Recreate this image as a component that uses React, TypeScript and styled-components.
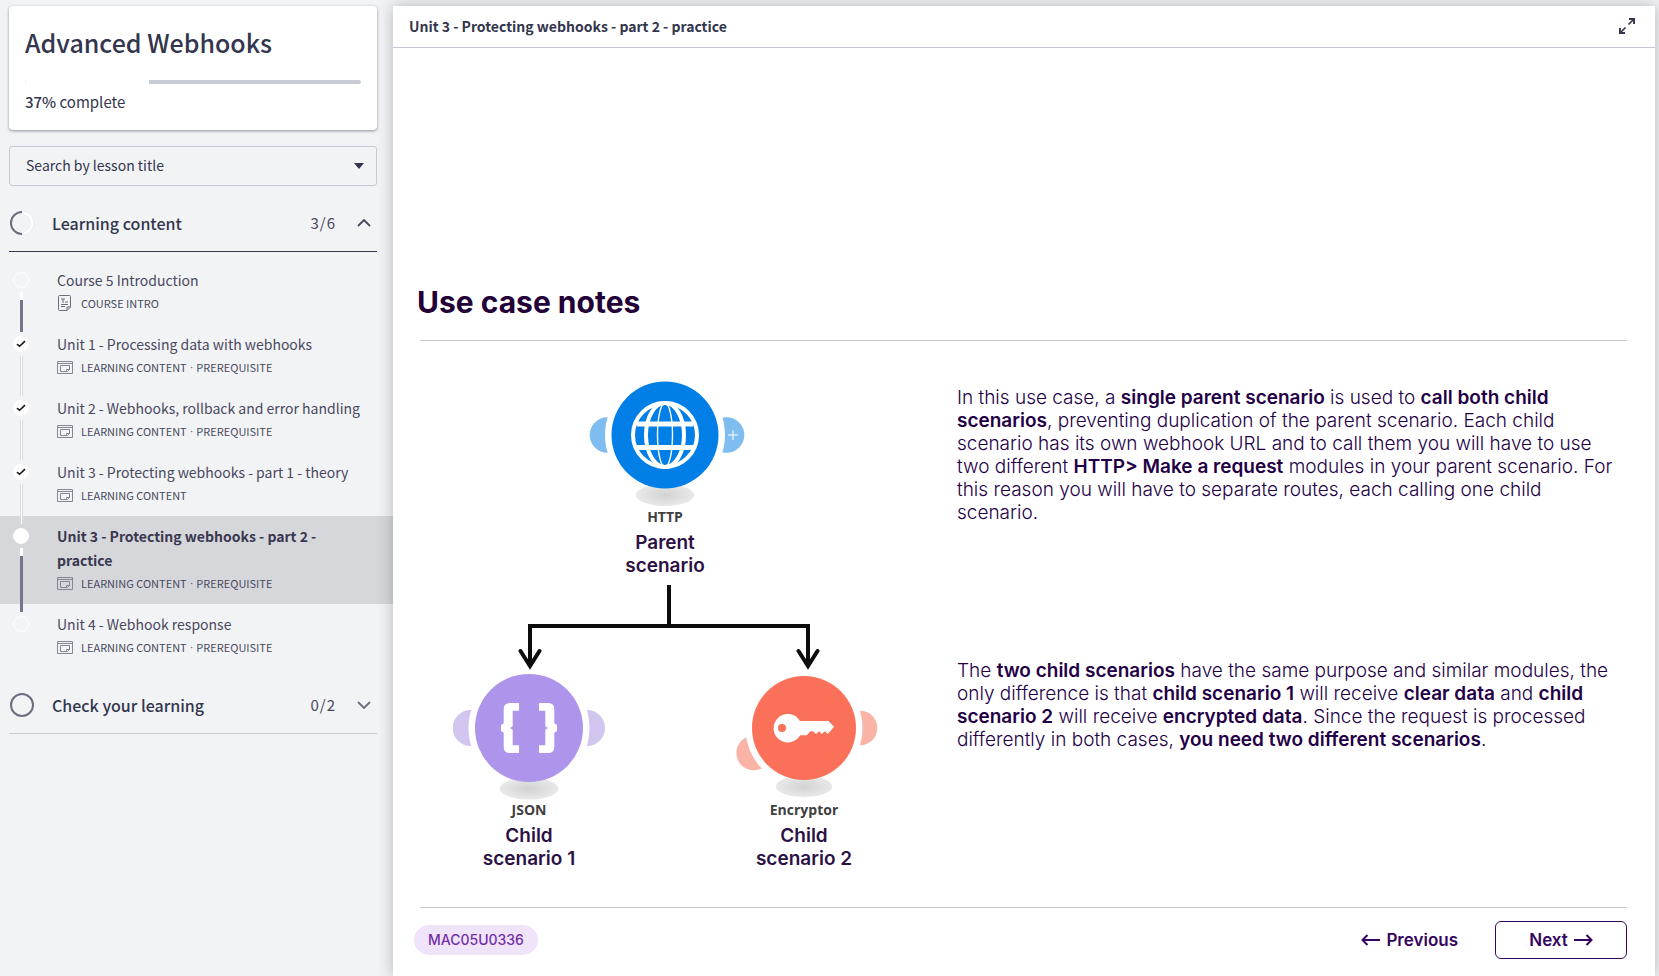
import React from "react";
import styled, { createGlobalStyle, css } from "styled-components";

const UI_FONT = '"Noto Sans CJK SC", "Noto Sans", sans-serif';
const SLIDE_FONT = 'Inter, "Liberation Sans", sans-serif';

const INK = "#33364d";
const INK_SOFT = "#4a4960";
const GREY = "#6d6d82";
const PURPLE = "#230046";

const GlobalStyle = createGlobalStyle`
  *, *::before, *::after { box-sizing: border-box; }
  body { margin: 0; background: #f1f3f5; color: ${INK}; font-family: ${UI_FONT}; }
  h1, h2, p, ol { margin: 0; padding: 0; }
  button, select { font: inherit; color: inherit; }
`;

const Page = styled.div`
  display: flex;
  min-height: 100vh;
`;

/* ---------- sidebar ---------- */

const Sidebar = styled.aside`
  flex: none;
  width: 393px;
  padding-top: 6px;
`;

const ProgressCard = styled.section`
  height: 124px;
  margin: 0 16px 16px 9px;
  padding: 16px 16px 0;
  background: #fff;
  border-radius: 4px;
  box-shadow: 0 1px 3px rgba(40, 44, 60, 0.5);
`;

const CourseTitle = styled.h1`
  font-size: 25px;
  line-height: 40px;
  font-weight: 500;
`;

const ProgressTrack = styled.div`
  height: 4px;
  margin-top: 18px;
  border-radius: 2px;
  background: #c8cad6;
  overflow: hidden;
`;

const ProgressFill = styled.div`
  height: 100%;
  background: #fff;
`;

const ProgressText = styled.p`
  margin-top: 6px;
  font-size: 15px;
  line-height: 24px;

  strong { font-weight: 500; }
`;

const SearchBox = styled.label`
  display: flex;
  align-items: center;
  height: 40px;
  margin: 0 16px 9px 9px;
  padding-right: 12px;
  border: 1px solid #c6c8d6;
  border-radius: 3px;
`;

const SearchSelect = styled.select`
  flex: 1;
  height: 38px;
  padding: 0 0 2px 16px;
  border: 0;
  background: transparent;
  appearance: none;
  font-size: 14px;
`;

const SectionHeader = styled.button<{ $open?: boolean }>`
  display: flex;
  align-items: center;
  width: 368px;
  height: 57px;
  margin-left: 9px;
  padding: 0 6px 0 1px;
  border: 0;
  border-bottom: 1px solid ${(p) => (p.$open ? INK : "#c9cad2")};
  background: transparent;
  text-align: left;
`;

const SectionTitle = styled.span`
  flex: 1;
  margin-left: 18px;
  font-size: 16px;
  font-weight: 500;
  line-height: 24px;
`;

const SectionCount = styled.span`
  margin-right: 21px;
  font-size: 15px;
  line-height: 24px;
  letter-spacing: 1px;
  color: ${INK_SOFT};
`;

const LessonList = styled.ol`
  padding: 8px 0 9px;
  list-style: none;
`;

const LessonLink = styled.a<{ $active?: boolean }>`
  display: flex;
  color: ${INK_SOFT};
  text-decoration: none;
  ${(p) =>
    p.$active &&
    css`
      background: #d6d7db;
      color: #3a3850;
    `}
`;

const Track = styled.span`
  flex: none;
  display: flex;
  flex-direction: column;
  align-items: center;
  width: 16px;
  margin: 0 28px 0 13px;
  padding-top: 12px;
`;

type MarkerKind = "empty" | "done" | "current";

const Marker = styled.span<{ $kind: MarkerKind }>`
  flex: none;
  display: flex;
  align-items: center;
  justify-content: center;
  width: 16px;
  height: 16px;
  border: 1px solid #fff;
  border-radius: 50%;
  background: ${(p) => (p.$kind === "empty" ? "#f3f4f6" : "#fff")};
`;

const TrackLine = styled.span<{ $dark?: boolean }>`
  position: relative;
  z-index: 1;
  flex: 1;
  width: 3px;
  margin: 4px 0 -8px;
  border: solid #dcdde2;
  border-width: 0 1px;
  background: #fff;
  ${(p) =>
    p.$dark &&
    css`
      border: 0;
      background: linear-gradient(#fff 8px, #757587 8px);
    `}
`;

const LessonText = styled.span`
  flex: 1;
  padding: 8px 20px 10px 0;
`;

const LessonTitle = styled.span<{ $bold?: boolean }>`
  display: block;
  font-size: 14px;
  line-height: 24px;
  font-weight: ${(p) => (p.$bold ? 700 : 400)};
`;

const LessonMeta = styled.span`
  display: flex;
  align-items: center;
  height: 22px;
  font-size: 11px;
  color: ${INK_SOFT};

  svg { margin-right: 8px; }
`;

const MetaDot = styled.span`
  margin: 0 3px;
  font-family: "Liberation Sans", sans-serif;
`;

/* ---------- lesson panel ---------- */

const Panel = styled.main`
  position: relative;
  z-index: 2;
  flex: 1;
  min-width: 0;
  display: flex;
  flex-direction: column;
  margin: 6px 4px 0 0;
  background: #fff;
  box-shadow: 0 0 14px rgba(40, 42, 60, 0.3);
`;

const PanelHeader = styled.header`
  display: flex;
  align-items: center;
  justify-content: space-between;
  height: 42px;
  padding: 0 20px 2px 16px;
  border-bottom: 1px solid #c8c6d6;
`;

const PanelTitle = styled.h2`
  font-size: 14px;
  font-weight: 700;
  line-height: 20px;
`;

const IconButton = styled.button`
  display: flex;
  padding: 0;
  border: 0;
  background: transparent;
`;

const Slide = styled.article`
  flex: 1;
  padding: 236px 28px 17px 21px;
  font-family: ${SLIDE_FONT};
  color: ${PURPLE};
`;

const SlideTitle = styled.h1`
  margin-left: 3px;
  font-size: 30px;
  font-weight: 700;
  line-height: 36px;
  color: #230038;
`;

const SlideBody = styled.div`
  display: grid;
  grid-template-columns: 537px minmax(0, 1fr);
  min-height: 568px;
  margin: 20px 0 0 6px;
  border: solid #cdc5ca;
  border-width: 1px 0;
`;

const Notes = styled.div`
  display: flex;
  flex-direction: column;
  gap: 135px;
  padding: 45px 8px 0 0;
  font-size: 19px;
  font-weight: 300;
  line-height: 23px;

  strong { font-weight: 600; }
`;

const Diagram = styled.div`
  position: relative;
`;

const Connectors = styled.svg`
  position: absolute;
  left: 0;
  top: 0;
`;

const Node = styled.div<{ $x: number; $y: number }>`
  position: absolute;
  left: ${(p) => p.$x}px;
  top: ${(p) => p.$y}px;
  width: 160px;
  text-align: center;

  svg { display: block; }
`;

const NodeLabel = styled.div`
  font-family: "Open Sans", "Noto Sans", sans-serif;
  font-size: 14px;
  font-weight: 700;
  line-height: 20px;
  color: #404040;
`;

const NodeCaption = styled.div`
  width: 104px;
  margin: 4px auto 0;
  font-size: 19px;
  font-weight: 600;
  line-height: 23px;
  color: #2d1145;
`;

const SlideFooter = styled.footer`
  display: flex;
  align-items: center;
  height: 38px;
  margin-top: 13px;
`;

const CodePill = styled.span`
  margin-right: auto;
  padding: 0 14px;
  border-radius: 15px;
  background: #f0e4fb;
  color: #7230a8;
  font-size: 14px;
  font-weight: 500;
  line-height: 30px;
`;

const NavButton = styled.button<{ $outlined?: boolean }>`
  display: flex;
  align-items: center;
  justify-content: center;
  gap: 6px;
  height: 38px;
  padding: 0;
  border: 0;
  background: #fff;
  color: #350560;
  font-size: 17px;
  font-weight: 600;
  ${(p) =>
    p.$outlined &&
    css`
      width: 132px;
      margin-left: 37px;
      border: 1px solid #350560;
      border-radius: 6px;
    `}
`;

/* ---------- drawings ---------- */

const RingIcon = ({ half }: { half?: boolean }) => (
  <svg width="24" height="24" viewBox="0 0 24 24" fill="none" strokeWidth="2">
    {half && <circle cx="12" cy="12" r="11.500" stroke="#dfe0e5" strokeWidth="1" />}
    <circle cx="12" cy="12" r={half ? 10.5 : 11} stroke={half ? "#fff" : GREY} />
    {half && <path d="M12 1a11 11 0 0 0 0 22" stroke={GREY} />}
  </svg>
);

const Chevron = ({ up }: { up?: boolean }) => (
  <svg width="14" height="8" viewBox="0 0 14 8" fill="none" stroke={up ? INK_SOFT : GREY} strokeWidth="1.800">
    <path d={up ? "M1 7L7 1L13 7" : "M1 1L7 7L13 1"} />
  </svg>
);

const CheckIcon = () => (
  <svg width="10" height="8" viewBox="0 0 10 8" fill="none" stroke="#16161c" strokeWidth="1.6">
    <path d="M1 4.200L3.600 6.300L9 1.200" />
  </svg>
);

const PageIcon = () => (
  <svg width="16" height="16" viewBox="0 0 16 16" fill="none" stroke={GREY}>
    <path d="M2.500 .5h10a1 1 0 0 1 1 1v10.500l-3.500 3.500h-7.500a1 1 0 0 1-1-1v-13a1 1 0 0 1 1-1z" />
    <path d="M10 15.500v-3.500h3.500M4 4h4M6 4v4M8 7h3M4 9.500h7M4 11.500h4" />
  </svg>
);

const WindowIcon = () => (
  <svg width="16" height="13" viewBox="0 0 16 13" fill="none" stroke="#85859a">
    <path d="M.5.5h15v12H.5zM.5 2.500h15M3.500 4.500h9v4l-2 2h-7z" />
    <path d="M9.500 10v-1.500h3" />
  </svg>
);

const ExpandIcon = () => (
  <svg width="16" height="16" viewBox="0 0 16 16" fill="none" stroke={INK} strokeWidth="1.600">
    <path d="M9.500 6.500L14.500 1.500M6.500 9.500L1.500 14.500" />
    <path d="M10 .9h5.100V6M6 15.100H.9V10" strokeWidth="2" />
  </svg>
);

const ArrowIcon = ({ back }: { back?: boolean }) => (
  <svg width="19" height="12" viewBox="0 0 19 12" fill="none" stroke="#350560" strokeWidth="2">
    <path d={back ? "M19 6H1.500M6.500 1L1.500 6L6.500 11" : "M0 6H17.500M12.500 1L17.500 6L12.500 11"} />
  </svg>
);

type BubbleProps = {
  id: string;
  r: number;
  color: string;
  earColor: string;
  ears: { x: number; y: number }[];
  children: React.ReactNode;
};

/* Round module bubble centred on 80,55 with its side connectors and floor shadow. */
const Bubble = ({ id, r, color, earColor, ears, children }: BubbleProps) => (
  <svg width="160" height="127" viewBox="0 0 160 127">
    <defs>
      <radialGradient id={id}>
        <stop offset="0" stopColor="#d2d2d2" />
        <stop offset="1" stopColor="#e9e9e9" />
      </radialGradient>
    </defs>
    {ears.map((e) => (
      <circle key={e.x} cx={e.x} cy={e.y} r={r / 3} fill={earColor} />
    ))}
    <circle cx="80" cy="55" r={r + 6.5} fill="#fff" />
    <ellipse cx="80" cy={r + 61.5} rx={r * 0.545} ry={r * 0.205} fill={`url(#${id})`} />
    <circle cx="80" cy="55" r={r} fill={color} />
    {children}
  </svg>
);

const Globe = () => (
  <g fill="none" stroke="#fff">
    <circle cx="80" cy="55" r="32" strokeWidth="4" />
    <ellipse cx="80" cy="55" rx="19" ry="32" strokeWidth="4" />
    <ellipse cx="80" cy="55" rx="7.500" ry="32" strokeWidth="1.400" />
    <path d="M52 44h56M52 67.500h56" strokeWidth="5" />
  </g>
);

const BRACE =
  "M-10 -25h-9q-6.300 0-6.300 6.300v14l-2.700 1.600v6.200l2.700 1.600v14q0 6.300 6.300 6.300h9v-7.700h-6.300v-15.600l-2.700-1.700l2.700-1.700v-15.600h6.300z";

const Braces = () => (
  <g fill="#fff" transform="translate(80 55)">
    <path d={BRACE} />
    <path d={BRACE} transform="scale(-1 1)" />
  </g>
);

const Key = () => (
  <g>
    <path
      fill="#fff"
      d="M75 48h29.500l5.500 5.700l-6.200 7.300l-3-2.700l-3 2.700l-2.800-2.700l-3 2.700l-3-2.700h-2.500l-3.700 4h-8z"
    />
    <circle cx="63.800" cy="55.200" r="14.200" fill="#fff" />
    <circle cx="58" cy="55" r="4" fill="#fb7059" />
  </g>
);

/* ---------- data ---------- */

type Lesson = {
  title: string;
  kind: string;
  prerequisite?: boolean;
  page?: boolean;
  marker: MarkerKind;
  line?: "light" | "dark";
};

const LESSONS: Lesson[] = [
  { title: "Course 5 Introduction", kind: "COURSE INTRO", page: true, marker: "empty", line: "dark" },
  { title: "Unit 1 - Processing data with webhooks", kind: "LEARNING CONTENT", prerequisite: true, marker: "done", line: "light" },
  { title: "Unit 2 - Webhooks, rollback and error handling", kind: "LEARNING CONTENT", prerequisite: true, marker: "done", line: "light" },
  { title: "Unit 3 - Protecting webhooks - part 1 - theory", kind: "LEARNING CONTENT", marker: "done", line: "light" },
  { title: "Unit 3 - Protecting webhooks - part 2 - practice", kind: "LEARNING CONTENT", prerequisite: true, marker: "current", line: "dark" },
  { title: "Unit 4 - Webhook response", kind: "LEARNING CONTENT", prerequisite: true, marker: "empty" },
];

const LessonRow = ({ lesson }: { lesson: Lesson }) => {
  const active = lesson.marker === "current";
  return (
    <li>
      <LessonLink href="#" $active={active} aria-current={active ? "page" : undefined}>
        <Track>
          <Marker $kind={lesson.marker}>{lesson.marker === "done" && <CheckIcon />}</Marker>
          {lesson.line && <TrackLine $dark={lesson.line === "dark"} />}
        </Track>
        <LessonText>
          <LessonTitle $bold={active}>{lesson.title}</LessonTitle>
          <LessonMeta>
            {lesson.page ? <PageIcon /> : <WindowIcon />}
            <span>{lesson.kind}</span>
            {lesson.prerequisite && (
              <>
                <MetaDot>·</MetaDot>
                <span>PREREQUISITE</span>
              </>
            )}
          </LessonMeta>
        </LessonText>
      </LessonLink>
    </li>
  );
};

export default function App() {
  return (
    <Page>
      <GlobalStyle />
      <Sidebar>
        <ProgressCard>
          <CourseTitle>Advanced Webhooks</CourseTitle>
          <ProgressTrack role="progressbar" aria-label="Course progress" aria-valuenow={37} aria-valuemin={0} aria-valuemax={100}>
            <ProgressFill style={{ width: "37%" }} />
          </ProgressTrack>
          <ProgressText>
            <strong>37%</strong> complete
          </ProgressText>
        </ProgressCard>

        <SearchBox>
          <SearchSelect aria-label="Search by lesson title" defaultValue="">
            <option value="">Search by lesson title</option>
          </SearchSelect>
          <svg width="10" height="6" viewBox="0 0 10 6" fill={INK}>
            <path d="M0 0h10L5 6z" />
          </svg>
        </SearchBox>

        <SectionHeader $open aria-expanded="true">
          <RingIcon half />
          <SectionTitle>Learning content</SectionTitle>
          <SectionCount>3/6</SectionCount>
          <Chevron up />
        </SectionHeader>
        <LessonList>
          {LESSONS.map((l) => (
            <LessonRow key={l.title} lesson={l} />
          ))}
        </LessonList>
        <SectionHeader aria-expanded="false">
          <RingIcon />
          <SectionTitle>Check your learning</SectionTitle>
          <SectionCount>0/2</SectionCount>
          <Chevron />
        </SectionHeader>
      </Sidebar>

      <Panel>
        <PanelHeader>
          <PanelTitle>Unit 3 - Protecting webhooks - part 2 - practice</PanelTitle>
          <IconButton aria-label="Full screen">
            <ExpandIcon />
          </IconButton>
        </PanelHeader>

        <Slide>
          <SlideTitle>Use case notes</SlideTitle>
          <SlideBody>
            <Diagram>
              <Connectors width="480" height="340" viewBox="0 0 480 340" fill="none" stroke="#0c0c0c" strokeWidth="4">
                <path d="M249 244V285M110 324V285H388V324" />
                <path d="M100.500 310L110 325L119.500 310M378.500 310L388 325L397.500 310" strokeLinecap="round" />
              </Connectors>
              <Node $x={165} $y={39}>
                <Bubble id="floor-http" r={53.5} color="#017fe6" earColor="#7fbcf0" ears={[{ x: 22.5, y: 55 }, { x: 141.5, y: 55 }]}>
                  <Globe />
                  <path d="M143 55h10M148 50v10" stroke="#fff" />
                </Bubble>
                <NodeLabel>HTTP</NodeLabel>
                <NodeCaption>Parent scenario</NodeCaption>
              </Node>
              <Node $x={29} $y={332}>
                <Bubble id="floor-json" r={54} color="#ac95ea" earColor="#d2c5f0" ears={[{ x: 21.7, y: 55 }, { x: 138, y: 55 }]}>
                  <Braces />
                </Bubble>
                <NodeLabel>JSON</NodeLabel>
                <NodeCaption>Child scenario 1</NodeCaption>
              </Node>
              <Node $x={304} $y={332}>
                <Bubble id="floor-encryptor" r={52} color="#fb7059" earColor="#f9b3a7" ears={[{ x: 29.7, y: 80 }, { x: 136, y: 55 }]}>
                  <Key />
                </Bubble>
                <NodeLabel>Encryptor</NodeLabel>
                <NodeCaption>Child scenario 2</NodeCaption>
              </Node>
            </Diagram>
            <Notes>
              <p>
                In this use case, a <strong>single parent scenario</strong> is used to{" "}
                <strong>call both child scenarios</strong>, preventing duplication of the parent scenario. Each child
                scenario has its own webhook URL and to call them you will have to use two different{" "}
                <strong>HTTP&gt; Make a request</strong> modules in your parent scenario. For this reason you will have
                to separate routes, each calling one child scenario.
              </p>
              <p>
                The <strong>two child scenarios</strong> have the same purpose and similar modules, the only difference
                is that <strong>child scenario 1</strong> will receive <strong>clear data</strong> and{" "}
                <strong>child scenario 2</strong> will receive <strong>encrypted data</strong>. Since the request is
                processed differently in both cases, <strong>you need two different scenarios</strong>.
              </p>
            </Notes>
          </SlideBody>
          <SlideFooter>
            <CodePill>MAC05U0336</CodePill>
            <NavButton>
              <ArrowIcon back />
              Previous
            </NavButton>
            <NavButton $outlined>
              Next
              <ArrowIcon />
            </NavButton>
          </SlideFooter>
        </Slide>
      </Panel>
    </Page>
  );
}
